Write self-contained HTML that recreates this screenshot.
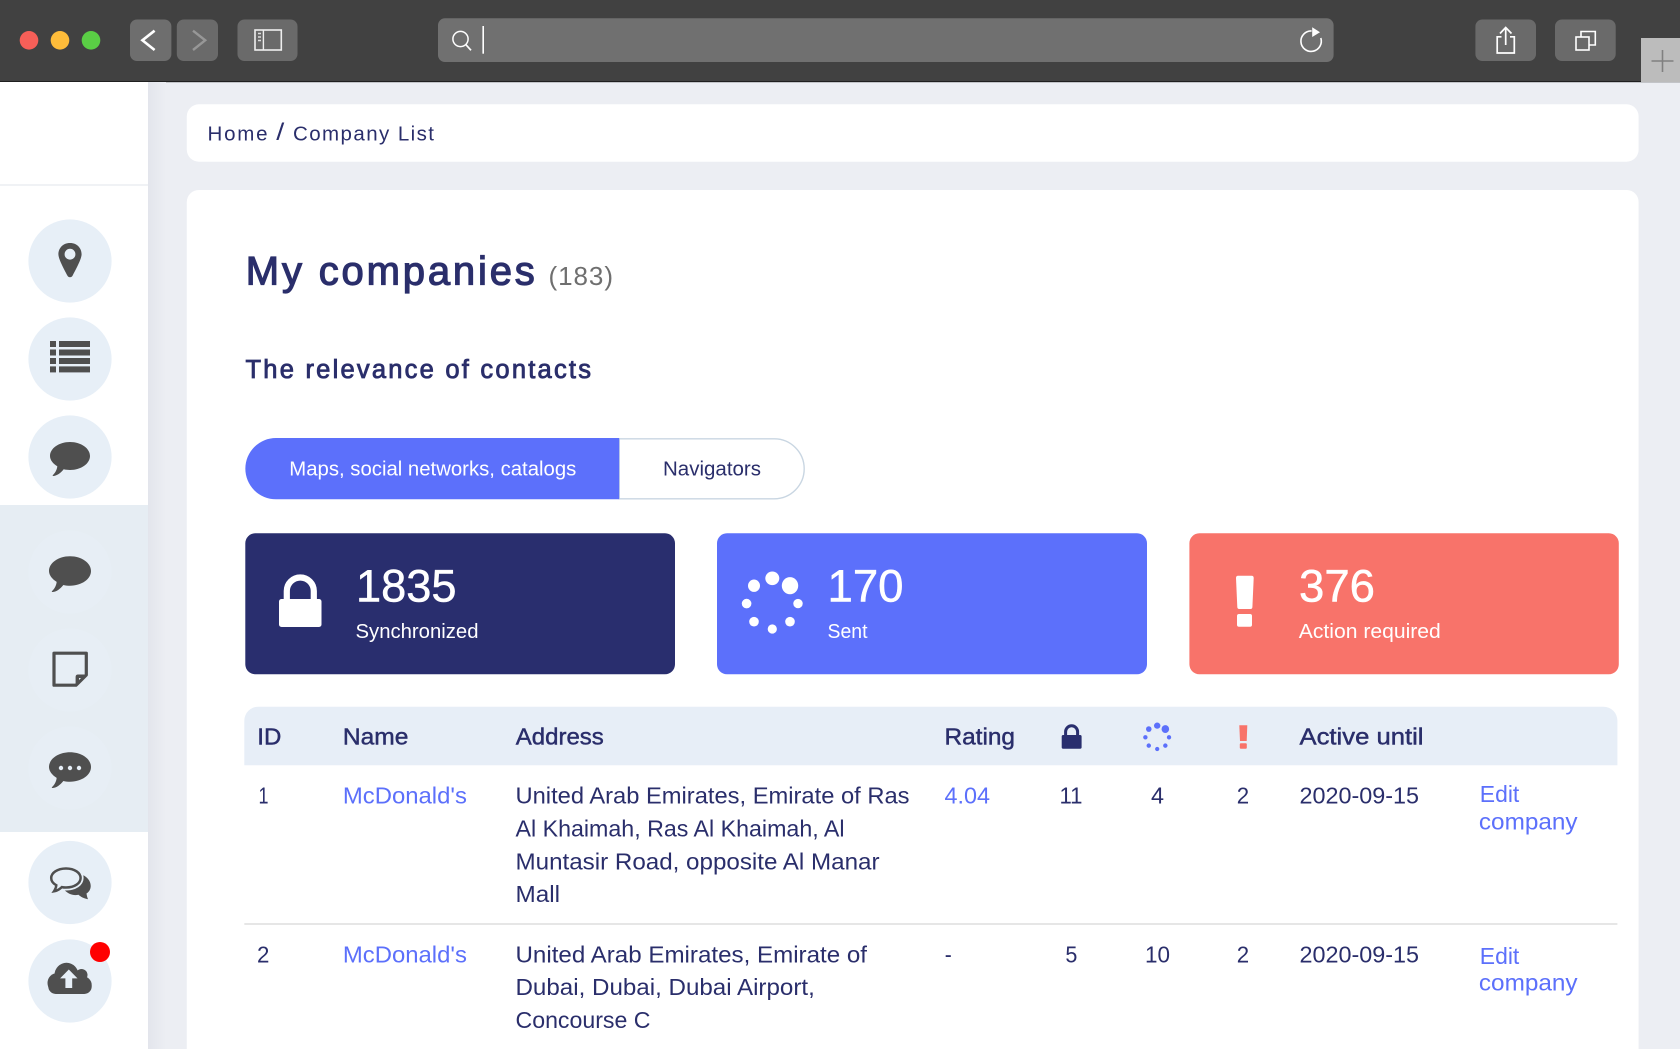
<!DOCTYPE html>
<html lang="en"><head><meta charset="utf-8"><title>My companies</title>
<style>
html,body{margin:0;padding:0;width:1680px;height:1049px;overflow:hidden;background:#eceef3}
svg{display:block}
text{font-family:"Liberation Sans",Arial,sans-serif;fill:#2a2e6b}
.r{font-size:23px}
.sb{stroke:#2a2e6b;stroke-width:.45px;font-size:23px}
.l{fill:#5c70fb}
.w{fill:#fff}
.ic{fill:#4f4f4f}
</style></head><body>
<svg width="1680" height="1049" viewBox="0 0 1680 1049" xmlns="http://www.w3.org/2000/svg">
<defs><linearGradient id="sh" x1="0" x2="1" y1="0" y2="0"><stop offset="0" stop-color="#e3e5ec"/><stop offset="1" stop-color="#eceef3"/></linearGradient></defs>
<rect width="1680" height="1049" fill="#eceef3"/>

<!-- browser bar -->
<rect width="1680" height="82" fill="#414141"/>
<rect y="81" width="1680" height="1.2" fill="#1f1f1f"/>
<circle cx="29" cy="40.3" r="9.3" fill="#f65f58"/>
<circle cx="60" cy="40.3" r="9.3" fill="#febc3a"/>
<circle cx="91" cy="40.3" r="9.3" fill="#5ace45"/>
<rect x="130" y="19.5" width="41.4" height="41.5" rx="7" fill="#6e6e6e"/>
<rect x="176.8" y="19.5" width="41.2" height="41.5" rx="7" fill="#6a6a6a"/>
<rect x="237.5" y="19.5" width="60" height="41.5" rx="7" fill="#6a6a6a"/>
<path d="M154.6 30.7 142.4 40.3 154.6 50" fill="none" stroke="#fff" stroke-width="2.6"/>
<path d="M193 30.7 205.2 40.3 193 50" fill="none" stroke="#979797" stroke-width="2.4"/>
<rect x="255" y="30" width="26.3" height="20" fill="none" stroke="#eee" stroke-width="1.6"/>
<path d="M263.4 30V50" stroke="#eee" stroke-width="1.4"/>
<path d="M258 33.5h3M258 37h3M258 40.5h3" stroke="#ddd" stroke-width="1.4"/>
<rect x="438" y="18.3" width="895.6" height="43.7" rx="7" fill="#707070"/>
<circle cx="460.5" cy="39" r="7.6" fill="none" stroke="#fff" stroke-width="1.5"/>
<path d="M465.8 44.6 471 50.3" stroke="#fff" stroke-width="1.7"/>
<rect x="482.4" y="26" width="1.6" height="27.7" fill="#fff"/>
<path d="M1320.8 38A10.2 10.2 0 1 1 1311.6 31" fill="none" stroke="#fff" stroke-width="1.6"/>
<path d="M1312.2 27.3 1320 32.3 1312.2 37Z" fill="#fff"/>
<rect x="1475.4" y="19.5" width="60.6" height="41.5" rx="7" fill="#6a6a6a"/>
<rect x="1555" y="19.5" width="60.7" height="41.5" rx="7" fill="#6a6a6a"/>
<path d="M1501.5 36.8H1497.2V53H1514.3V36.8H1510" fill="none" stroke="#fff" stroke-width="1.7"/>
<path d="M1505.7 45V27.5M1500 33.5 1505.7 27.5 1511.5 33.5" fill="none" stroke="#fff" stroke-width="1.7"/>
<rect x="1576" y="37" width="13" height="13" fill="none" stroke="#fff" stroke-width="1.6"/>
<path d="M1581 37V31.5H1595.3V45H1589" fill="none" stroke="#fff" stroke-width="1.6"/>
<rect x="1641" y="38" width="39" height="44" fill="#bcbcbc"/>
<path d="M1651.5 61H1673.5M1662.5 50V72" stroke="#808080" stroke-width="1.6"/>

<!-- sidebar -->
<rect x="148" y="82" width="18" height="967" fill="url(#sh)"/>
<rect x="0" y="82" width="148" height="967" fill="#fff"/>
<rect x="0" y="184" width="148" height="2" fill="#f0f2f5"/>
<rect x="0" y="505" width="148" height="327" fill="#e6edf3"/>
<g fill="#e7eff7">
<circle cx="70" cy="261" r="41.6"/>
<circle cx="70" cy="359" r="41.6"/>
<circle cx="70" cy="457" r="41.6"/>
<circle cx="70" cy="882.5" r="41.6"/>
<circle cx="70" cy="981" r="41.6"/>
</g>
<g fill="#e7eef5">
<circle cx="70" cy="572" r="41.6"/>
<circle cx="70" cy="670" r="41.6"/>
<circle cx="70" cy="768" r="41.6"/>
</g>
<!-- pin -->
<path class="ic" fill-rule="evenodd" d="M70 243C62.8 243 58.4 248.3 58.4 254.3 58.4 258.8 63.6 268.5 67.4 275.6 68.6 277.8 71.4 277.8 72.6 275.6 76.4 268.5 81.6 258.8 81.6 254.3 81.6 248.3 77.2 243 70 243ZM70 248.8A5.4 5.4 0 1 1 70 259.6 5.4 5.4 0 1 1 70 248.8Z"/>
<!-- list -->
<g class="ic">
<rect x="50" y="341" width="6" height="6"/><rect x="59" y="341" width="31" height="6"/>
<rect x="50" y="349.5" width="6" height="6"/><rect x="59" y="349.5" width="31" height="6"/>
<rect x="50" y="358" width="6" height="6"/><rect x="59" y="358" width="31" height="6"/>
<rect x="50" y="366.4" width="6" height="6"/><rect x="59" y="366.4" width="31" height="6"/>
</g>
<!-- chats -->
<path class="ic" d="M70 442C81 442 90 448.3 90 456 90 463.7 81 470 70 470 67.8 470 65.7 469.8 63.7 469.3 60.7 473 57 476 53 476 52.5 476 52.6 475.3 53 475 55.5 472.5 57 469.5 57.3 466.3 53 463.7 50 460 50 456 50 448.3 59 442 70 442Z"/>
<path class="ic" transform="translate(70 571) scale(1.05) translate(-70 -456)" d="M70 442C81 442 90 448.3 90 456 90 463.7 81 470 70 470 67.8 470 65.7 469.8 63.7 469.3 60.7 473 57 476 53 476 52.5 476 52.6 475.3 53 475 55.5 472.5 57 469.5 57.3 466.3 53 463.7 50 460 50 456 50 448.3 59 442 70 442Z"/>
<path class="ic" transform="translate(70 767) scale(1.05) translate(-70 -456)" d="M70 442C81 442 90 448.3 90 456 90 463.7 81 470 70 470 67.8 470 65.7 469.8 63.7 469.3 60.7 473 57 476 53 476 52.5 476 52.6 475.3 53 475 55.5 472.5 57 469.5 57.3 466.3 53 463.7 50 460 50 456 50 448.3 59 442 70 442Z"/>
<circle cx="61" cy="768" r="2.2" fill="#e7eff7"/><circle cx="70" cy="768" r="2.2" fill="#e7eff7"/><circle cx="79" cy="768" r="2.2" fill="#e7eff7"/>
<!-- note -->
<path d="M54 653.2H86.3V675L76 685.2H54Z" fill="none" stroke="#4f4f4f" stroke-width="3.2" stroke-linejoin="round"/>
<path class="ic" fill-rule="evenodd" d="M87.5 674.5H78Q75.6 674.5 75.6 677V686.7ZM79 678H83L79 682Z"/>
<!-- comments -->
<path class="ic" d="M80 874C87 876 91 881 90.7 886.5 90.5 889.5 89 892 86.5 893.5 86.8 895.5 87.3 897.5 88 899.3 84 898.5 80.5 896.8 78.5 894.8 73.5 895.7 68.5 894.5 64.5 890 70 888 78 884 80 874Z"/>
<path d="M66 868.5C74.6 868.5 80.6 872.8 80.6 878 80.6 883.2 74.6 887.5 66 887.5 64.5 887.5 63.2 887.4 61.8 887.1 59.5 889.3 57 890.8 54 891.3 55.4 889.2 56.2 887.2 56.3 885.2 52.9 883.4 51.2 880.8 51.2 878 51.2 872.8 57.4 868.5 66 868.5Z" fill="#e7eff7" stroke="#e7eff7" stroke-width="6"/>
<path d="M66 868.5C74.6 868.5 80.6 872.8 80.6 878 80.6 883.2 74.6 887.5 66 887.5 64.5 887.5 63.2 887.4 61.8 887.1 59.5 889.3 57 890.8 54 891.3 55.4 889.2 56.2 887.2 56.3 885.2 52.9 883.4 51.2 880.8 51.2 878 51.2 872.8 57.4 868.5 66 868.5Z" fill="#e7eff7" stroke="#4f4f4f" stroke-width="2.5"/>
<!-- cloud -->
<g class="ic">
<rect x="48.3" y="979" width="43.4" height="15" rx="7.5"/>
<circle cx="66.5" cy="974.8" r="12"/>
<circle cx="81.5" cy="975" r="6"/>
<circle cx="83" cy="985" r="8.7"/>
<circle cx="57.5" cy="983" r="10"/>
</g>
<path d="M68.8 969.5 77.5 978.4H72.2V988H65.4V978.4H60.1Z" fill="#e7eff7"/>
<circle cx="100" cy="952" r="10" fill="#f00"/>

<!-- breadcrumb -->
<rect x="186.8" y="104.3" width="1451.8" height="57.4" rx="12" fill="#fff"/>
<text x="207.5" y="140.7" font-size="20.5" textLength="60" lengthAdjust="spacing">Home</text>
<text x="276.3" y="140.2" font-size="24" textLength="8" lengthAdjust="spacingAndGlyphs">/</text>
<text x="293" y="140.7" font-size="20.5" textLength="141" lengthAdjust="spacing">Company List</text>

<!-- main card -->
<rect x="186.8" y="190" width="1451.8" height="880" rx="12" fill="#fff"/>
<text x="245.8" y="284.5" textLength="289" lengthAdjust="spacing" style="font-size:40px;stroke:#2a2e6b;stroke-width:1.2px">My companies</text>
<text x="548.5" y="285" font-size="26" textLength="64.5" lengthAdjust="spacing" style="fill:#6f6f6f">(183)</text>
<text x="245.5" y="377.8" font-size="25.5" textLength="345.5" lengthAdjust="spacing" style="stroke:#2a2e6b;stroke-width:.85px">The relevance of contacts</text>

<!-- tabs -->
<path d="M619.2 438.8H774.2A30 30 0 0 1 804.2 468.8 30 30 0 0 1 774.2 498.8H619.2Z" fill="#fff" stroke="#c9d6e2" stroke-width="1.4"/>
<path d="M619.2 438H276A30.6 30.6 0 0 0 276 499.3H619.2Z" fill="#5c70fb"/>
<text class="w" x="289.3" y="475.7" font-size="20" textLength="287" lengthAdjust="spacingAndGlyphs">Maps, social networks, catalogs</text>
<text x="663" y="475.7" font-size="20" textLength="98" lengthAdjust="spacingAndGlyphs">Navigators</text>

<!-- stat cards -->
<rect x="245.3" y="533.3" width="429.7" height="141" rx="10" fill="#292e6e"/>
<rect x="717" y="533.3" width="430" height="141" rx="10" fill="#5c70fb"/>
<rect x="1189.4" y="533.3" width="429.4" height="141" rx="10" fill="#f8736a"/>
<path d="M286.8 600V591A13.5 13.5 0 0 1 313.8 591V600" fill="none" stroke="#fff" stroke-width="6.2"/>
<rect x="279" y="599" width="42.5" height="28" rx="2.5" fill="#fff"/>
<g fill="#fff">
<ellipse cx="772.3" cy="578.3" rx="7" ry="6.8"/><ellipse cx="790" cy="585.7" rx="8.2" ry="8.6"/>
<circle cx="798" cy="603.6" r="4.7"/><circle cx="790" cy="621.7" r="4.8"/><circle cx="772.3" cy="629" r="4.6"/>
<circle cx="754" cy="621.7" r="4.8"/><circle cx="746.6" cy="603.6" r="4.8"/><ellipse cx="754" cy="585.7" rx="6" ry="6.2"/>
</g>
<path d="M1238 575.7H1251.7Q1253.7 575.7 1253.7 578L1252.4 607Q1252.3 609 1250.5 609H1239.2Q1237.4 609 1237.3 607L1236 578Q1236 575.7 1238 575.7Z" fill="#fff"/>
<rect x="1237" y="614" width="15" height="12.7" rx="2" fill="#fff"/>

<text class="w" x="356" y="601.7" font-size="45" textLength="100.5" lengthAdjust="spacingAndGlyphs" style="stroke:#fff;stroke-width:.5px">1835</text>
<text class="w" x="355.5" y="638" font-size="20" textLength="123" lengthAdjust="spacingAndGlyphs">Synchronized</text>
<text class="w" x="827.5" y="601.7" font-size="45" textLength="76" lengthAdjust="spacingAndGlyphs" style="stroke:#fff;stroke-width:.5px">170</text>
<text class="w" x="827.5" y="638" font-size="20" textLength="40" lengthAdjust="spacingAndGlyphs">Sent</text>
<text class="w" x="1299" y="601.7" font-size="45" textLength="76" lengthAdjust="spacingAndGlyphs" style="stroke:#fff;stroke-width:.5px">376</text>
<text class="w" x="1298.8" y="638" font-size="20" textLength="142" lengthAdjust="spacingAndGlyphs">Action required</text>

<!-- table header -->
<path d="M244.3 765.3V720.7A14 14 0 0 1 258.3 706.7H1603.4A14 14 0 0 1 1617.4 720.7V765.3Z" fill="#e7eef7"/>
<text class="sb" x="257.3" y="744.7" textLength="24" lengthAdjust="spacingAndGlyphs">ID</text>
<text class="sb" x="342.9" y="744.7" textLength="65.5" lengthAdjust="spacingAndGlyphs">Name</text>
<text class="sb" x="515.8" y="744.7" textLength="88" lengthAdjust="spacingAndGlyphs">Address</text>
<text class="sb" x="944.5" y="744.7" textLength="70.5" lengthAdjust="spacingAndGlyphs">Rating</text>
<text class="sb" x="1299.5" y="744.7" textLength="124" lengthAdjust="spacingAndGlyphs">Active until</text>
<path d="M1065.6 736V731.8A6 6 0 0 1 1077.6 731.8V736" fill="none" stroke="#292e6e" stroke-width="3"/>
<rect x="1061.7" y="735" width="19.9" height="13.7" rx="1.5" fill="#292e6e"/>
<g fill="#5c70fb" transform="translate(1157.2 737.3) scale(.46) translate(-772.3 -603.6)">
<ellipse cx="772.3" cy="578.3" rx="7" ry="6.8"/><ellipse cx="790" cy="585.7" rx="8.2" ry="8.6"/>
<circle cx="798" cy="603.6" r="4.7"/><circle cx="790" cy="621.7" r="4.8"/><circle cx="772.3" cy="629" r="4.6"/>
<circle cx="754" cy="621.7" r="4.8"/><circle cx="746.6" cy="603.6" r="4.8"/><ellipse cx="754" cy="585.7" rx="6" ry="6.2"/>
</g>
<path d="M1239.3 725.3H1247.3L1246.7 741H1240Z" fill="#f8736a"/>
<rect x="1239.8" y="743.3" width="7" height="5.5" rx="1" fill="#f8736a"/>

<!-- row 1 -->
<text class="r" x="258.5" y="803.7" textLength="10" lengthAdjust="spacingAndGlyphs">1</text>
<text class="r l" x="342.9" y="803.7" textLength="124" lengthAdjust="spacingAndGlyphs">McDonald's</text>
<text class="r" x="515.5" y="803.7" textLength="394" lengthAdjust="spacingAndGlyphs">United Arab Emirates, Emirate of Ras</text>
<text class="r" x="515.5" y="836.5" textLength="329" lengthAdjust="spacingAndGlyphs">Al Khaimah, Ras Al Khaimah, Al</text>
<text class="r" x="515.5" y="869.3" textLength="364" lengthAdjust="spacingAndGlyphs">Muntasir Road, opposite Al Manar</text>
<text class="r" x="515.5" y="902" textLength="44.5" lengthAdjust="spacingAndGlyphs">Mall</text>
<text class="r l" x="944.5" y="803.7" textLength="45.5" lengthAdjust="spacingAndGlyphs">4.04</text>
<text class="r" x="1059.5" y="803.7" textLength="23" lengthAdjust="spacingAndGlyphs">11</text>
<text class="r" x="1151" y="803.7" textLength="13" lengthAdjust="spacingAndGlyphs">4</text>
<text class="r" x="1236.8" y="803.7" textLength="12.4" lengthAdjust="spacingAndGlyphs">2</text>
<text class="r" x="1299.5" y="803.7" textLength="119.5" lengthAdjust="spacingAndGlyphs">2020-09-15</text>
<text class="r l" x="1479.8" y="802" textLength="39.5" lengthAdjust="spacingAndGlyphs">Edit</text>
<text class="r l" x="1478.9" y="829.3" textLength="98.7" lengthAdjust="spacingAndGlyphs">company</text>

<rect x="244.3" y="923" width="1373.1" height="2" fill="#e6e6e6"/>

<!-- row 2 -->
<text class="r" x="257" y="962.3" textLength="12.4" lengthAdjust="spacingAndGlyphs">2</text>
<text class="r l" x="342.9" y="962.3" textLength="124" lengthAdjust="spacingAndGlyphs">McDonald's</text>
<text class="r" x="515.5" y="962.3" textLength="351.5" lengthAdjust="spacingAndGlyphs">United Arab Emirates, Emirate of</text>
<text class="r" x="515.5" y="995" textLength="299.3" lengthAdjust="spacingAndGlyphs">Dubai, Dubai, Dubai Airport,</text>
<text class="r" x="515.5" y="1027.8" textLength="135" lengthAdjust="spacingAndGlyphs">Concourse C</text>
<text class="r" x="944.8" y="962.3" textLength="7" lengthAdjust="spacingAndGlyphs">-</text>
<text class="r" x="1065.4" y="962.3" textLength="12" lengthAdjust="spacingAndGlyphs">5</text>
<text class="r" x="1145" y="962.3" textLength="25" lengthAdjust="spacingAndGlyphs">10</text>
<text class="r" x="1236.8" y="962.3" textLength="12.4" lengthAdjust="spacingAndGlyphs">2</text>
<text class="r" x="1299.5" y="962.3" textLength="119.5" lengthAdjust="spacingAndGlyphs">2020-09-15</text>
<text class="r l" x="1479.8" y="964" textLength="39.5" lengthAdjust="spacingAndGlyphs">Edit</text>
<text class="r l" x="1478.9" y="990.7" textLength="98.7" lengthAdjust="spacingAndGlyphs">company</text>
</svg>
</body></html>
